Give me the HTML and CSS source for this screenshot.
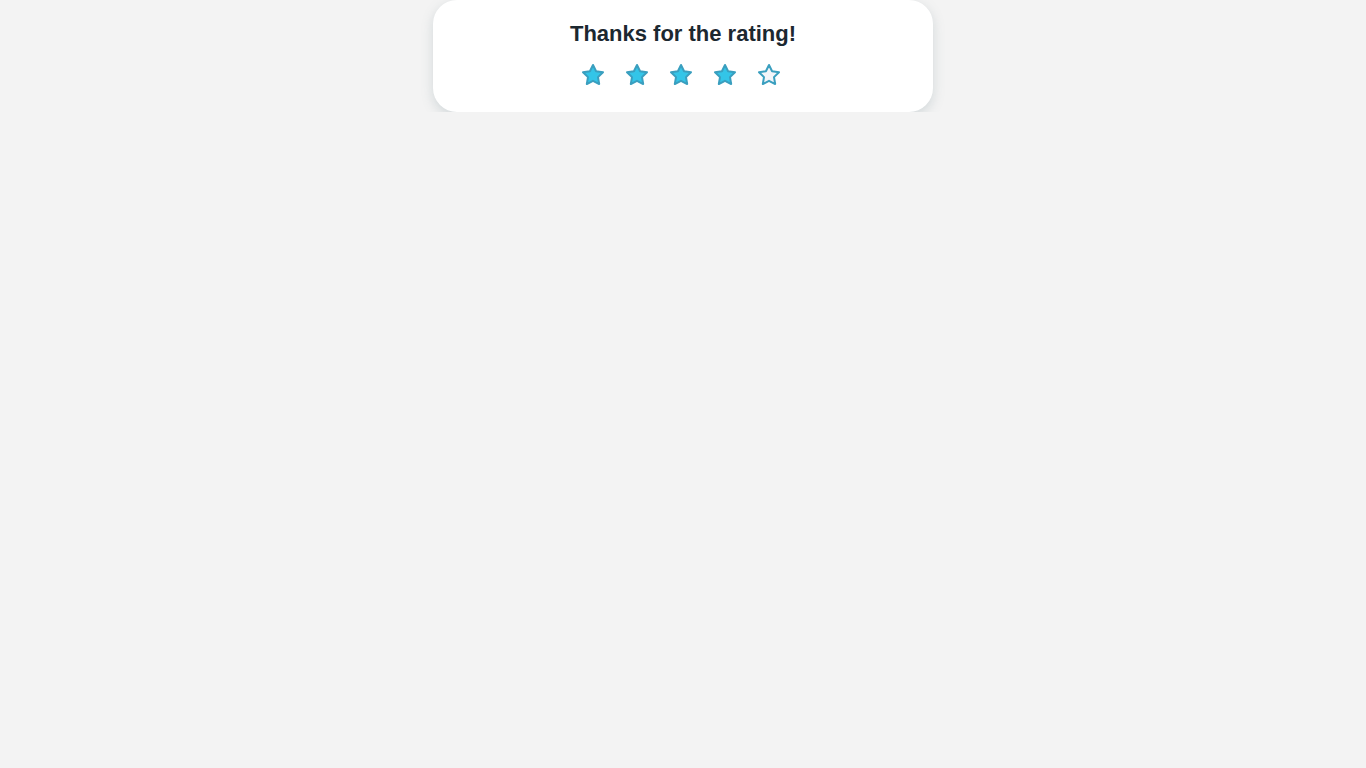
FILE: index.html
```html
<!DOCTYPE html>
<html lang="en">
<head>
<meta charset="utf-8">
<title>Rating</title>
<link rel="stylesheet" href="styles.css">
</head>
<body>
<div class="page">
  <div class="card">
    <h1 class="title">Thanks for the rating!</h1>
    <div class="stars">
      <svg class="star filled" viewBox="0 0 24 24"><polygon points="12 2 15.09 8.26 22 9.27 17 14.14 18.18 21.02 12 17.77 5.82 21.02 7 14.14 2 9.27 8.91 8.26 12 2"/></svg>
      <svg class="star filled" viewBox="0 0 24 24"><polygon points="12 2 15.09 8.26 22 9.27 17 14.14 18.18 21.02 12 17.77 5.82 21.02 7 14.14 2 9.27 8.91 8.26 12 2"/></svg>
      <svg class="star filled" viewBox="0 0 24 24"><polygon points="12 2 15.09 8.26 22 9.27 17 14.14 18.18 21.02 12 17.77 5.82 21.02 7 14.14 2 9.27 8.91 8.26 12 2"/></svg>
      <svg class="star filled" viewBox="0 0 24 24"><polygon points="12 2 15.09 8.26 22 9.27 17 14.14 18.18 21.02 12 17.77 5.82 21.02 7 14.14 2 9.27 8.91 8.26 12 2"/></svg>
      <svg class="star empty" viewBox="0 0 24 24"><polygon points="12 2 15.09 8.26 22 9.27 17 14.14 18.18 21.02 12 17.77 5.82 21.02 7 14.14 2 9.27 8.91 8.26 12 2"/></svg>
    </div>
  </div>
</div>
</body>
</html>
```
FILE: styles.css
```css
html, body {
  margin: 0;
  padding: 0;
  background: #f3f3f3;
  font-family: "Liberation Sans", Arial, sans-serif;
}
.page {
  display: flex;
  justify-content: center;
}
.card {
  width: 500px;
  height: 112px;
  box-sizing: border-box;
  background: #ffffff;
  border-radius: 24px;
  box-shadow: 0 4px 12px rgba(110, 135, 145, 0.25);
  display: flex;
  flex-direction: column;
  align-items: center;
  padding-top: 21px;
}
.title {
  margin: 0;
  font-size: 22px;
  line-height: 26px;
  font-weight: 700;
  color: #1c2830;
}
.stars {
  display: flex;
  gap: 20px;
  margin-top: 16px;
  padding-right: 4px;
}
.star {
  width: 24px;
  height: 24px;
  display: block;
}
.star polygon {
  stroke-width: 2;
  stroke-linejoin: round;
  stroke: #3a9fbf;
}
.star.filled polygon {
  fill: #33c5e8;
}
.star.empty polygon {
  fill: #f3f5f9;
}
```
